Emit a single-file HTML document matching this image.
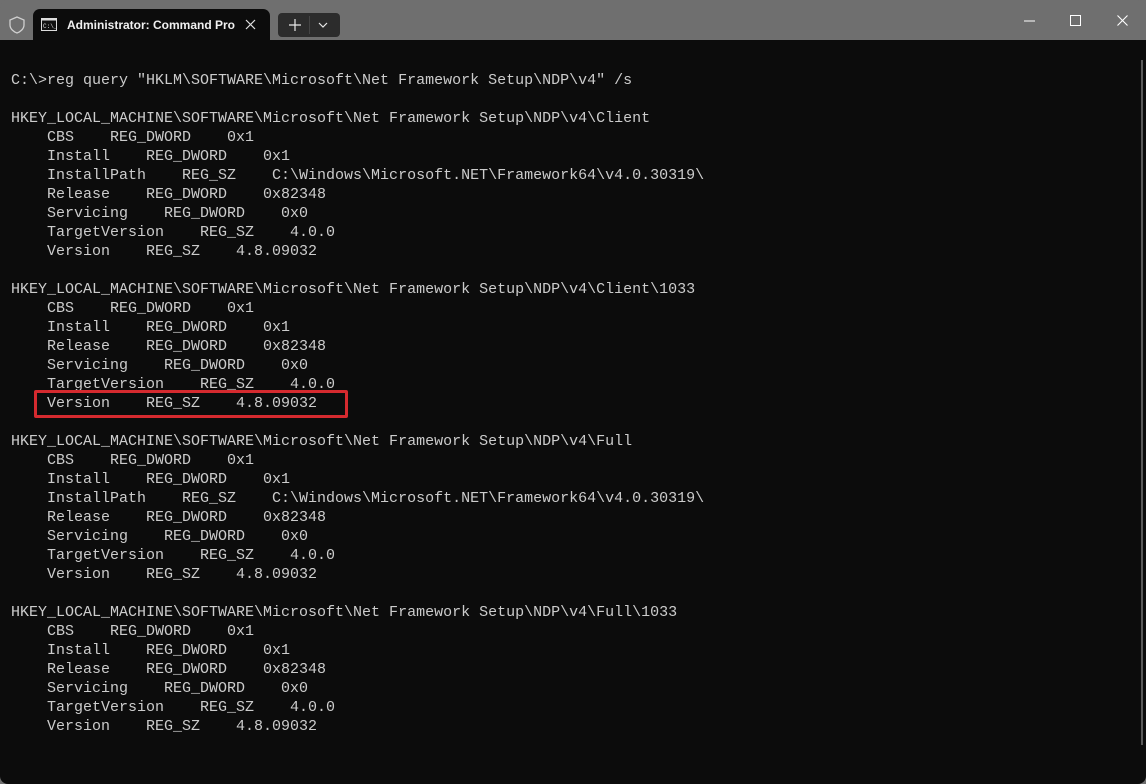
<!DOCTYPE html>
<html><head><meta charset="utf-8"><style>
html,body{margin:0;padding:0;width:1146px;height:784px;overflow:hidden;background:#6f6f6f;}
.win{position:absolute;left:0;top:0;width:1146px;height:784px;background:#6f6f6f;border-radius:8px;overflow:hidden}
.term{position:absolute;left:0;top:40px;width:1146px;height:744px;background:#0c0c0c}
.tab{position:absolute;left:33px;top:9px;width:237px;height:31px;background:#0c0c0c;border-radius:7px 7px 0 0}
.tab .t{position:absolute;left:34px;top:9px;font:bold 12px "Liberation Sans",sans-serif;color:#f0f0f0;white-space:nowrap}
.btns{position:absolute;left:278px;top:13px;width:62px;height:24px;background:#2c2c2c;border-radius:4px}
pre{position:absolute;left:11px;top:71px;margin:0;font:15px/19px "Liberation Mono",monospace;color:#cccccc}
.box{position:absolute;left:34px;top:390px;width:308px;height:22px;border:3px solid #d52a2f;border-radius:2px}
.sb{position:absolute;left:1141px;top:60px;width:2px;height:685px;background:#5a5a5a}
</style></head><body><div class="win">
<svg style="position:absolute;left:9px;top:16px" width="16" height="18" viewBox="0 0 16 18"><path d="M8 1 L15 4 V9 C15 13 11 16 8 17 C5 16 1 13 1 9 V4 Z" fill="none" stroke="#cfcfcf" stroke-width="1.3"/></svg>
<div class="tab">
<svg style="position:absolute;left:8px;top:9px" width="16" height="13" viewBox="0 0 16 13"><rect x="0.5" y="0.5" width="15" height="12" fill="#111" stroke="#ddd"/><rect x="0.5" y="0.5" width="15" height="2" fill="#ddd"/><text x="2" y="10" font-size="6" fill="#ddd" font-family="Liberation Mono">C:\_</text></svg>
<div class="t">Administrator: Command Pro</div>
<svg style="position:absolute;left:212px;top:10px" width="11" height="11" viewBox="0 0 11 11"><path d="M1 1 L10 10 M10 1 L1 10" stroke="#e0e0e0" stroke-width="1.2"/></svg>
</div>
<div class="btns">
<svg style="position:absolute;left:10px;top:5px" width="14" height="14"><path d="M7 1 V13 M1 7 H13" stroke="#e8e8e8" stroke-width="1.2"/></svg>
<div style="position:absolute;left:31px;top:3px;width:1px;height:18px;background:#444"></div>
<svg style="position:absolute;left:40px;top:8px" width="10" height="8"><path d="M1 2 L5 6 L9 2" fill="none" stroke="#e8e8e8" stroke-width="1.2"/></svg>
</div>
<svg style="position:absolute;left:1024px;top:20px" width="12" height="2"><path d="M0 1 H11" stroke="#fff" stroke-width="1"/></svg>
<svg style="position:absolute;left:1070px;top:15px" width="12" height="12"><rect x="0.5" y="0.5" width="10" height="10" fill="none" stroke="#fff"/></svg>
<svg style="position:absolute;left:1117px;top:15px" width="12" height="12"><path d="M0.5 0.5 L10.5 10.5 M10.5 0.5 L0.5 10.5" stroke="#fff" stroke-width="1.1"/></svg>
<div class="term"></div>
<div class="sb"></div>
<pre>C:\&gt;reg query "HKLM\SOFTWARE\Microsoft\Net Framework Setup\NDP\v4" /s

HKEY_LOCAL_MACHINE\SOFTWARE\Microsoft\Net Framework Setup\NDP\v4\Client
    CBS    REG_DWORD    0x1
    Install    REG_DWORD    0x1
    InstallPath    REG_SZ    C:\Windows\Microsoft.NET\Framework64\v4.0.30319\
    Release    REG_DWORD    0x82348
    Servicing    REG_DWORD    0x0
    TargetVersion    REG_SZ    4.0.0
    Version    REG_SZ    4.8.09032

HKEY_LOCAL_MACHINE\SOFTWARE\Microsoft\Net Framework Setup\NDP\v4\Client\1033
    CBS    REG_DWORD    0x1
    Install    REG_DWORD    0x1
    Release    REG_DWORD    0x82348
    Servicing    REG_DWORD    0x0
    TargetVersion    REG_SZ    4.0.0
    Version    REG_SZ    4.8.09032

HKEY_LOCAL_MACHINE\SOFTWARE\Microsoft\Net Framework Setup\NDP\v4\Full
    CBS    REG_DWORD    0x1
    Install    REG_DWORD    0x1
    InstallPath    REG_SZ    C:\Windows\Microsoft.NET\Framework64\v4.0.30319\
    Release    REG_DWORD    0x82348
    Servicing    REG_DWORD    0x0
    TargetVersion    REG_SZ    4.0.0
    Version    REG_SZ    4.8.09032

HKEY_LOCAL_MACHINE\SOFTWARE\Microsoft\Net Framework Setup\NDP\v4\Full\1033
    CBS    REG_DWORD    0x1
    Install    REG_DWORD    0x1
    Release    REG_DWORD    0x82348
    Servicing    REG_DWORD    0x0
    TargetVersion    REG_SZ    4.0.0
    Version    REG_SZ    4.8.09032</pre>
<div class="box"></div>
</div></body></html>
